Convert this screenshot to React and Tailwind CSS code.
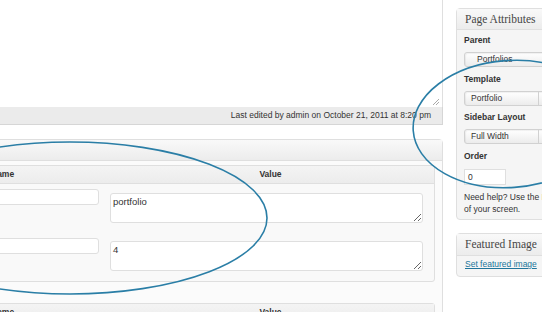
import React from "react";

const ring = "#2a7ea6";

function Select({ value, indent = false, divider = true }) {
  return (
    <div className="mt-[6px] flex h-[15px] w-[200px] items-center rounded-[3px] border border-[#d1d1d1] bg-gradient-to-b from-white to-[#ececec] shadow-[inset_1px_1px_1px_rgba(0,0,0,0.06)]">
      <span className={`w-[73px] shrink-0 leading-[13px] ${indent ? "pl-[12px]" : "pl-[6px]"}`}>{value}</span>
      {divider && <span className="h-full border-l border-[#d1d1d1]" />}
    </div>
  );
}

function TableHead() {
  return (
    <div className="grid h-[18px] grid-cols-[198px_1fr] items-center border-b border-[#dfdfdf] bg-gradient-to-b from-[#f4f4f4] to-[#ececec] text-[8.5px] font-bold text-[#333]">
      <span className="pl-[82px]">Name</span>
      <span className="text-center">Value</span>
    </div>
  );
}

function FieldRow({ value, first }) {
  return (
    <div className={`grid grid-cols-[198px_1fr] ${first ? "h-[49px]" : "h-[48px]"}`}>
      <div className="px-[8px] pt-[5px]">
        <input
          readOnly
          className="block h-[16px] w-full rounded-[3px] border border-[#dfdfdf] bg-white"
        />
      </div>
      <div className={`pl-[3px] pr-[11px] ${first ? "pt-[9px]" : "pt-[8px]"}`}>
        <textarea
          readOnly
          defaultValue={value}
          className="block h-[30px] w-full rounded-[3px] border border-[#dfdfdf] bg-white px-[2px] pt-[2px] text-[9.5px] leading-[11px] text-[#333] outline-none"
        />
      </div>
    </div>
  );
}

export default function App() {
  return (
    <div className="relative h-[312px] w-[542px] overflow-hidden bg-white font-['Liberation_Sans',Arial,sans-serif] text-[#333]">
      <div className="flex">
        {/* left column, its left part is outside the shot */}
        <main className="-ml-[100px] w-[543px] shrink-0">
          <div className="relative h-[107px] border-r border-[#dfdfdf] bg-white">
            <svg className="absolute bottom-[2px] right-[3px]" width="7" height="7" viewBox="0 0 7 7">
              <path d="M1 7 L7 1 M4 7 L7 4" stroke="#a0a0a0" strokeWidth="0.9" />
            </svg>
          </div>
          <div className="flex h-[18px] items-center justify-end border-r border-b border-[#d6d6d6] bg-[#ebebeb] pr-[11px] text-[8.5px]">
            Last edited by admin on October 21, 2011 at 8:20 pm
          </div>

          <section className="mt-[14px] rounded-[4px] border border-[#dfdfdf] bg-[#fbfbfb]">
            <div className="h-[21px] border-b border-[#dfdfdf] bg-gradient-to-b from-[#f9f9f9] to-[#ececec]" />
            <div className="px-[7px] pt-[4px] pb-[20px]">
              <div className="rounded-[3px] border border-[#dfdfdf] bg-[#f9f9f9]">
                <TableHead />
                <FieldRow value="portfolio" first />
                <FieldRow value="4" />
              </div>
              <div className="mt-[21px] rounded-[3px] border border-[#dfdfdf] bg-[#f9f9f9]">
                <TableHead />
                <div className="h-[40px]" />
              </div>
            </div>
          </section>
        </main>

        {/* sidebar */}
        <aside className="ml-[13px] w-[280px] shrink-0 text-[8.5px]">
          <div className="mt-[8px] rounded-[4px] border border-[#dfdfdf] bg-[#f5f5f5]">
            <h3 className="h-[21px] border-b border-[#dfdfdf] bg-gradient-to-b from-[#f9f9f9] to-[#ececec] pl-[8px] font-['Liberation_Serif',serif] text-[11.5px] leading-[20px] text-[#464646]">
              Page Attributes
            </h3>
            <div className="px-[7px] pt-[5px] pb-[4px]">
              <p className="h-[11px] font-bold leading-[11px]">Parent</p>
              <Select value="Portfolios" indent divider={false} />
              <p className="mt-[7px] h-[11px] font-bold leading-[11px]">Template</p>
              <div className="mt-[2px]">
                <Select value="Portfolio" />
              </div>
              <p className="mt-[6px] h-[11px] font-bold leading-[11px]">Sidebar Layout</p>
              <div className="mt-[1px]">
                <Select value="Full Width" />
              </div>
              <p className="mt-[7px] h-[11px] font-bold leading-[11px]">Order</p>
              <div className="mt-[7px] h-[16px] w-[42px] border border-[#dfdfdf] bg-white pl-[3px] leading-[14px]">0</div>
              <p className="mt-[7px] leading-[11.5px]">
                Need help? Use the Help tab in the upper right
                <br />
                of your screen.
              </p>
            </div>
          </div>

          <div className="mt-[13px] rounded-[4px] border border-[#dfdfdf] bg-[#f5f5f5]">
            <h3 className="h-[22px] border-b border-[#dfdfdf] bg-gradient-to-b from-[#f9f9f9] to-[#ececec] pl-[8px] font-['Liberation_Serif',serif] text-[11.5px] leading-[21px] text-[#464646]">
              Featured Image
            </h3>
            <div className="px-[8px] pt-[3px] pb-[6px] leading-[11px]">
              <a href="#" className="text-[#21759b] underline">Set featured image</a>
            </div>
          </div>
        </aside>
      </div>

      {/* annotation rings drawn over the screen */}
      <svg className="pointer-events-none absolute inset-0" width="542" height="312" viewBox="0 0 542 312">
        <ellipse cx="70" cy="218" rx="197" ry="76" fill="none" stroke={ring} strokeWidth="1.6" />
        <ellipse cx="510" cy="124" rx="97" ry="63.5" fill="none" stroke={ring} strokeWidth="1.6" transform="rotate(-4 510 124)" />
      </svg>
    </div>
  );
}
